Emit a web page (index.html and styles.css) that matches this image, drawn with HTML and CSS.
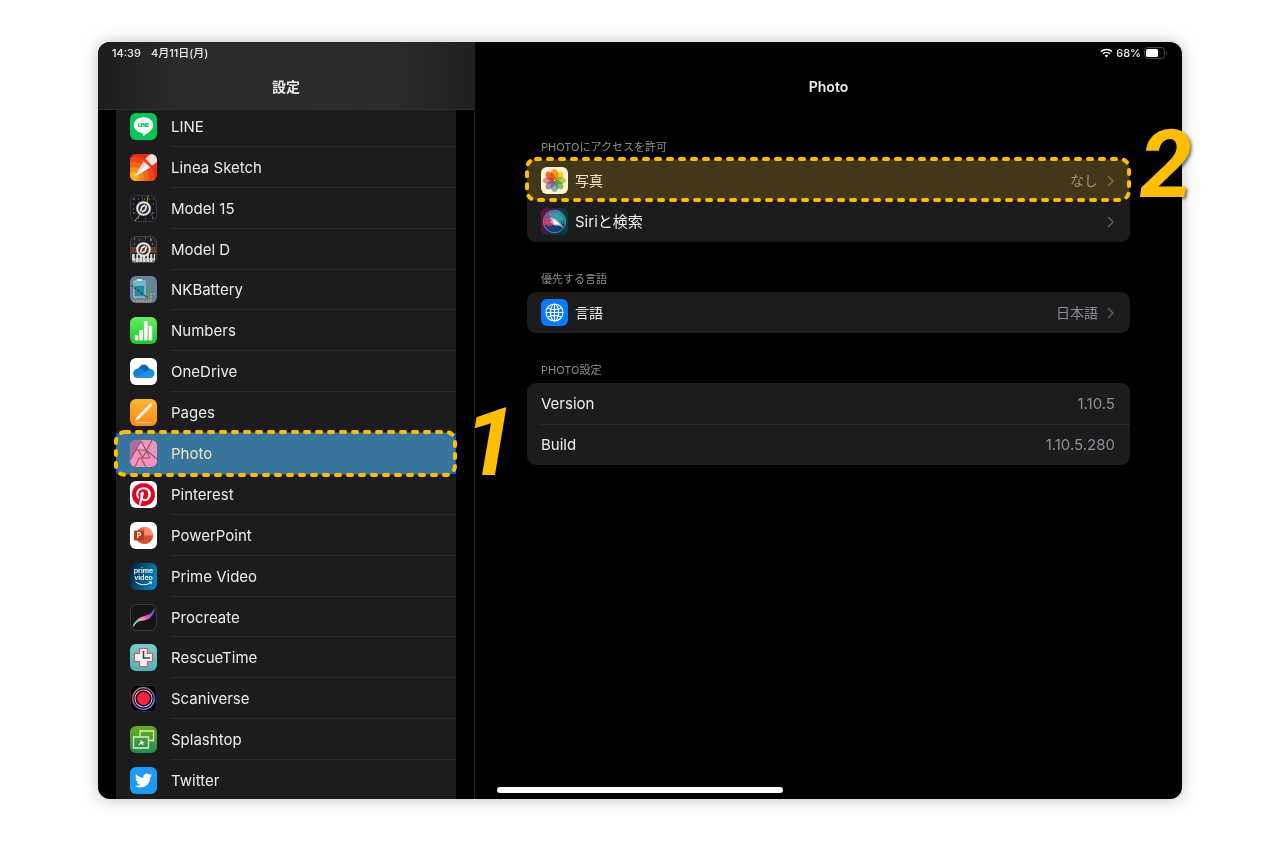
FILE: index.html
```html
<!DOCTYPE html>
<html lang="ja">
<head>
  <meta charset="UTF-8">
  <meta name="viewport" content="width=device-width, initial-scale=1.0">
  <title>設定 - Photo</title>
  <link rel="stylesheet" href="styles.css">
</head>
<body>
  <div class="device">
    <aside class="sidebar">
      <header class="sidebar-header">
        <div class="status">
          <span>14:39</span>
          <span>4月11日(月)</span>
        </div>
        <h2>設定</h2>
      </header>
      <nav class="scroller">
        <ul class="app-list">
          <li><a href="#">
            <svg class="icon" viewBox="0 0 27 27"><rect width="27" height="27" rx="6" fill="#06c755"/><path d="M13.500 4.200c5.600 0 9.700 3.400 9.700 7.900 0 4.800-5.500 8.500-9.500 10.800-.9.500-1.200 0-1-.9.300-1.500 0-1.900-1.300-2.100C7 19 3.800 16 3.800 12.100c0-4.500 4.100-7.900 9.700-7.900z" fill="#fff"/><text x="13.500" y="14" text-anchor="middle" class="line-mark">LINE</text></svg>
            <span>LINE</span></a></li>
          <li><a href="#">
            <svg class="icon" viewBox="0 0 27 27"><defs><clipPath id="tile"><rect width="27" height="27" rx="6"/></clipPath></defs><g clip-path="url(#tile)"><rect width="27" height="27" fill="#ea2d1c"/><circle cx="4" cy="23" r="20" fill="#f0441b"/><circle cx="4" cy="23" r="15" fill="#f5661b"/><circle cx="4" cy="23" r="10" fill="#fa8d1c"/><circle cx="4" cy="23" r="5" fill="#fdb024"/><path d="M4.500 22.500L13.500 7l6.500 6.500z" fill="#fbd3c4"/><path d="M4.500 22.500L17 10l3 3.500z" fill="#fff"/><path d="M15.500 5c2-3 5-5 9-6l4 5c-1 4-3 6-6.500 7.500z" fill="#f4e3da"/></g></svg>
            <span>Linea Sketch</span></a></li>
          <li><a href="#">
            <svg class="icon" viewBox="0 0 27 27"><rect x=".5" y=".5" width="26" height="26" rx="6" fill="#18191b" stroke="#38383a"/><path d="M3 4h2M8 4h1M14 4h1M19 4h1M23 4h1M3 9h1M23 9h1M3 14h1M3 18h2M8 23h1M15 24h1M22 18h2M22 23h1" stroke="#8b8f92"/><path d="M18 1c-1 4 0 8-3 12S8 22 5 26" fill="none" stroke="#c99a2b"/><path d="M12 1c1 3 0 5 2 6M21 12c-2 6 1 8 3 12" fill="none" stroke="#315f8f" stroke-width=".8"/><circle cx="13.500" cy="13.500" r="6.300" fill="#292a2c" stroke="#e9e9e9" stroke-width="2"/><path d="M10.500 16.500l1.200-4.500 3.300-2M16.500 10.500l-1.200 4.500-3.300 2" fill="none" stroke="#eee" stroke-width="1.600"/></svg>
            <span>Model 15</span></a></li>
          <li><a href="#">
            <svg class="icon" viewBox="0 0 27 27"><g clip-path="url(#tile)"><rect width="27" height="27" fill="#242427"/><path d="M4 3h1M9 4h1M15 2h1M20 4h2M4 8h1M22 8h1" stroke="#aaa"/><path d="M20 3h2" stroke="#c66c31"/><path d="M0 11h27v6H0z" fill="#6a3b25"/><path d="M2 18h23v9H2z" fill="#d6d6d6"/><path d="M5.500 18v9M9 18v9M12.500 18v9M16 18v9M19.500 18v9M23 18v9" stroke="#666" stroke-width=".7"/><path d="M5.500 17v5M9 17v5M16 17v5M19.500 17v5M23 17v5" stroke="#222" stroke-width="1.500"/></g><rect x=".5" y=".5" width="26" height="26" rx="6" fill="none" stroke="#444446"/><circle cx="13.500" cy="13.500" r="6.300" fill="#4a332a" stroke="#e9e9e9" stroke-width="2"/><path d="M10.500 16.500l1.200-4.500 3.300-2M16.500 10.500l-1.200 4.500-3.300 2" fill="none" stroke="#eee" stroke-width="1.600"/></svg>
            <span>Model D</span></a></li>
          <li><a href="#">
            <svg class="icon" viewBox="0 0 27 27"><rect width="27" height="27" rx="6" fill="#6d7f9c"/><path d="M4 5h11v16H4z" fill="#2589a3" stroke="#b5dbe2"/><path d="M7 3h5v2H7z" fill="#d8e8ec"/><path d="M5 6h9v4H5z" fill="#6db9c8"/><path d="M1 9l5 4 4 3 5 4 3 1" fill="none" stroke="#1d4958" stroke-width="1.200" stroke-dasharray="3 1"/><path d="M21 3l-2 17M19 21l-1-4" fill="none" stroke="#32b257" stroke-width="1.300"/><path d="M3 25h18v-7h4" fill="none" stroke="#c8cb51" stroke-dasharray="2 1"/></svg>
            <span>NKBattery</span></a></li>
          <li><a href="#">
            <svg class="icon" viewBox="0 0 27 27"><defs><linearGradient id="numbers" x2="0" y2="1"><stop stop-color="#6aec60"/><stop offset="1" stop-color="#18c82b"/></linearGradient></defs><rect width="27" height="27" rx="6" fill="url(#numbers)"/><path d="M5.200 18.500h2.800V23H5.200zM9.800 13.500h2.800V23H9.800zM14.400 4.500h2.800V23h-2.800zM19 9h2.800v14H19z" fill="#fff" stroke="#fff" stroke-width=".8" stroke-linejoin="round"/></svg>
            <span>Numbers</span></a></li>
          <li><a href="#">
            <svg class="icon" viewBox="0 0 27 27"><rect width="27" height="27" rx="6" fill="#fff"/><path d="M9 10c1.500-4.500 8-5.200 10 .5 2.500 0 3.800 2 4 4L12 17 6 12z" fill="#0f5fb8"/><path d="M7.500 20C1.500 19.500 2 11.500 7.500 10.500c2-.7 4 0 6 1.500l4 3-7 5z" fill="#1380d2"/><path d="M6 19.300l8-4.300 5-3.500c4-1.500 6.500 2 5.200 5.500-.8 2-2 3-4.200 3H8c-.8 0-1.500-.2-2-.7z" fill="#2093e0"/></svg>
            <span>OneDrive</span></a></li>
          <li><a href="#">
            <svg class="icon" viewBox="0 0 27 27"><defs><linearGradient id="pages" x2="0" y2="1"><stop stop-color="#ffb534"/><stop offset="1" stop-color="#ff8a17"/></linearGradient></defs><rect width="27" height="27" rx="6" fill="url(#pages)"/><path d="M5 22l1.700-3.800L20 4.800c1-1 2.800.7 1.800 1.800L8.600 20.200z" fill="#fff"/><path d="M5.500 23.500H22" stroke="#ffd19a"/></svg>
            <span>Pages</span></a></li>
          <li class="selected"><a href="#" aria-current="page">
            <svg class="icon" viewBox="0 0 27 27"><g clip-path="url(#tile)"><rect width="27" height="27" fill="#f583f2"/><path d="M0 0h11L0 20z" fill="#9654d8"/><path d="M11 2l5 8H7z" fill="#f79dfa"/><path d="M11 0h16v18L16 9z" fill="#e58af6"/><g fill="none" stroke="#703c80" stroke-width="1.200"><path d="M11 1L0 20M11 1l9 17M22 0l-9 17M5 10h11L27 19M8 10l5 8M20 18H9L5 27M11 18l5 9"/></g></g></svg>
            <span>Photo</span></a>
            <svg class="outline"><rect x="2" y="2" rx="9"/></svg>
            <b class="step step-one">1</b></li>
          <li><a href="#">
            <svg class="icon" viewBox="0 0 27 27"><rect width="27" height="27" rx="6" fill="#fff"/><path transform="translate(2 2) scale(.96)" fill="#e60023" d="M12.017 0C5.396 0 .029 5.367.029 11.987c0 5.079 3.158 9.417 7.618 11.162-.105-.949-.199-2.403.041-3.439.219-.937 1.406-5.957 1.406-5.957s-.359-.72-.359-1.781c0-1.663.967-2.911 2.168-2.911 1.024 0 1.518.769 1.518 1.688 0 1.029-.653 2.567-.992 3.992-.285 1.193.6 2.165 1.775 2.165 2.128 0 3.768-2.245 3.768-5.487 0-2.861-2.063-4.869-5.008-4.869-3.41 0-5.409 2.562-5.409 5.199 0 1.033.394 2.143.889 2.741.099.12.112.225.085.345-.09.375-.293 1.199-.334 1.363-.053.225-.172.271-.401.165-1.495-.69-2.433-2.878-2.433-4.646 0-3.776 2.748-7.252 7.92-7.252 4.158 0 7.392 2.967 7.392 6.923 0 4.135-2.607 7.462-6.233 7.462-1.214 0-2.354-.629-2.758-1.379l-.749 2.848c-.269 1.045-1.004 2.352-1.498 3.146 1.123.345 2.306.535 3.55.535 6.607 0 11.985-5.365 11.985-11.987C23.97 5.39 18.592.026 11.985.026L12.017 0z"/></svg>
            <span>Pinterest</span></a></li>
          <li><a href="#">
            <svg class="icon" viewBox="0 0 27 27"><rect width="27" height="27" rx="6" fill="#fff"/><circle cx="14.500" cy="13.500" r="8.500" fill="#ed6c47"/><path d="M14.500 5a8.500 8.500 0 0 1 8.500 8.500h-8.500z" fill="#ff8f6b"/><path d="M6 13.500h17a8.500 8.500 0 0 1-17 0z" fill="#d35230"/><rect x="4" y="8.500" width="10" height="10" rx="1" fill="#b83b1d"/><text x="9" y="16" text-anchor="middle" class="ppt-mark">P</text></svg>
            <span>PowerPoint</span></a></li>
          <li><a href="#">
            <svg class="icon" viewBox="0 0 27 27"><defs><linearGradient id="prime" x2="1" y2=".3"><stop stop-color="#061b40"/><stop offset="1" stop-color="#0a7fb5"/></linearGradient></defs><rect width="27" height="27" rx="6" fill="url(#prime)"/><text x="13.500" y="10" text-anchor="middle" class="prime-mark">prime</text><text x="13.500" y="16.500" text-anchor="middle" class="prime-mark">video</text><path d="M5.500 18.800c5 3.800 11 3.800 15.500.7M19 19l2.600-.2-.6 2.400" fill="none" stroke="#fff"/></svg>
            <span>Prime Video</span></a></li>
          <li><a href="#">
            <svg class="icon" viewBox="0 0 27 27"><defs><linearGradient id="brush" x1="0" y1="1" x2="1" y2="0"><stop stop-color="#f4f0a2"/><stop offset=".25" stop-color="#63c8b2"/><stop offset=".4" stop-color="#f6a2ad"/><stop offset=".6" stop-color="#e64dcf"/><stop offset=".8" stop-color="#7850eb"/><stop offset="1" stop-color="#4d9bea"/></linearGradient></defs><rect x=".5" y=".5" width="26" height="26" rx="6" fill="#161617" stroke="#39393b"/><path d="M2.500 23.500c1-5 4-8.500 9-10.500 5-2 10-2 13-9-.5 5-2 8.800-6 11-4 2-9 1-12.500 4.500z" fill="url(#brush)"/></svg>
            <span>Procreate</span></a></li>
          <li><a href="#">
            <svg class="icon" viewBox="0 0 27 27"><defs><linearGradient id="rescue" x2="0" y2="1"><stop stop-color="#77cdcc"/><stop offset="1" stop-color="#49b4b2"/></linearGradient></defs><rect width="27" height="27" rx="6" fill="url(#rescue)"/><path d="M9.500 4.500h8v5h5v8h-5v5h-8v-5h-5v-8h5z" fill="#f2f2f2" stroke="#d5575d" stroke-width="1.200"/><path d="M13.500 7v7H20" fill="none" stroke="#3c4548" stroke-width="1.600"/></svg>
            <span>RescueTime</span></a></li>
          <li><a href="#">
            <svg class="icon" viewBox="0 0 27 27"><defs><linearGradient id="scan" x1="0" y1="0" x2="1" y2="1"><stop stop-color="#ffb13b"/><stop offset=".35" stop-color="#ee4a76"/><stop offset=".7" stop-color="#6270ff"/><stop offset="1" stop-color="#49c8ff"/></linearGradient></defs><rect x=".5" y=".5" width="26" height="26" rx="6" fill="#020203" stroke="#29292b"/><circle cx="13.500" cy="13.500" r="10.800" fill="none" stroke="url(#scan)" stroke-width="1.300"/><circle cx="13.500" cy="13.500" r="8.500" fill="none" stroke="#dba4f2" stroke-width="1.200"/><circle cx="13.500" cy="13.500" r="6.500" fill="#ff2342"/></svg>
            <span>Scaniverse</span></a></li>
          <li><a href="#">
            <svg class="icon" viewBox="0 0 27 27"><defs><linearGradient id="splash" x2="0" y2="1"><stop stop-color="#69ae18"/><stop offset="1" stop-color="#218a56"/></linearGradient></defs><rect width="27" height="27" rx="6" fill="url(#splash)"/><path d="M10 10V5h13.500v9.500H18.500M3.500 11h15v11h-15z" fill="none" stroke="#d9efc8" stroke-width="1.300"/><path d="M8 19l2-2 1-3 2 2 2 .3-2 1 .3 2-2-1.300z" fill="#fff"/></svg>
            <span>Splashtop</span></a></li>
          <li><a href="#">
            <svg class="icon" viewBox="0 0 27 27"><rect width="27" height="27" rx="6" fill="#1d9bf0"/><path transform="translate(5 5) scale(.71)" fill="#fff" d="M23.953 4.57a10 10 0 01-2.825.775 4.958 4.958 0 002.163-2.723c-.951.555-2.005.959-3.127 1.184a4.92 4.92 0 00-8.384 4.482C7.69 8.095 4.067 6.13 1.64 3.162a4.822 4.822 0 00-.666 2.475c0 1.71.87 3.213 2.188 4.096a4.904 4.904 0 01-2.228-.616v.06a4.923 4.923 0 003.946 4.827 4.996 4.996 0 01-2.212.085 4.936 4.936 0 004.604 3.417 9.867 9.867 0 01-6.102 2.105c-.39 0-.779-.023-1.17-.067a13.995 13.995 0 007.557 2.209c9.053 0 13.998-7.496 13.998-13.985 0-.21 0-.42-.015-.63A9.935 9.935 0 0024 4.59z"/></svg>
            <span>Twitter</span></a></li>
        </ul>
      </nav>
    </aside>

    <main class="detail">
      <header class="detail-header">
        <div class="status status-right">
          <svg class="wifi" viewBox="0 0 13 10"><path d="M1 3.700c3.200-3 7.800-3 11 0M3 5.900c2-1.900 5-1.900 7 0" fill="none" stroke="#fff" stroke-width="1.600"/><path d="M4.700 7.500c1-1 2.600-1 3.600 0L6.500 9.500z" fill="#fff"/></svg>
          <span>68%</span>
          <svg class="battery" viewBox="0 0 24 12"><rect x=".5" y=".5" width="20" height="11" rx="3" fill="none" stroke="#4a4a4c"/><rect x="2" y="2" width="12" height="8" rx="1.500" fill="#fff"/><path d="M22 4c1.600.5 1.600 3.500 0 4z" fill="#4a4a4c"/></svg>
        </div>
        <h1>Photo</h1>
      </header>

      <section>
        <h3>PHOTOにアクセスを許可</h3>
        <div class="card">
          <a class="row" href="#">
            <svg class="icon" viewBox="0 0 27 27"><rect width="27" height="27" rx="6" fill="#fff"/><g class="petals"><ellipse cx="13.500" cy="7.500" rx="3.700" ry="5.500" fill="#f78a14"/><ellipse cx="13.500" cy="7.500" rx="3.700" ry="5.500" fill="#e4d51c" transform="rotate(45 13.500 13.500)"/><ellipse cx="13.500" cy="7.500" rx="3.700" ry="5.500" fill="#9bc94a" transform="rotate(90 13.500 13.500)"/><ellipse cx="13.500" cy="7.500" rx="3.700" ry="5.500" fill="#56b783" transform="rotate(135 13.500 13.500)"/><ellipse cx="13.500" cy="7.500" rx="3.700" ry="5.500" fill="#6aa7da" transform="rotate(180 13.500 13.500)"/><ellipse cx="13.500" cy="7.500" rx="3.700" ry="5.500" fill="#8a78c0" transform="rotate(225 13.500 13.500)"/><ellipse cx="13.500" cy="7.500" rx="3.700" ry="5.500" fill="#d978a8" transform="rotate(270 13.500 13.500)"/><ellipse cx="13.500" cy="7.500" rx="3.700" ry="5.500" fill="#f0412e" transform="rotate(315 13.500 13.500)"/></g></svg>
            <span class="label kanji">写真</span>
            <span class="value kanji">なし</span>
            <svg class="chevron" viewBox="0 0 8 12"><path d="M1 1l5 5-5 5"/></svg>
            <svg class="outline outline-dim"><rect x="2" y="2" rx="9"/></svg>
            <b class="step step-two">2</b>
          </a>
          <a class="row" href="#">
            <svg class="icon" viewBox="0 0 27 27"><defs><linearGradient id="siri" x2="1" y2=".2"><stop stop-color="#7d0b3f"/><stop offset=".5" stop-color="#1d2450"/><stop offset="1" stop-color="#063f3a"/></linearGradient><linearGradient id="orb" x2="1" y2=".4"><stop stop-color="#b0306c"/><stop offset=".4" stop-color="#5c5a94"/><stop offset=".6" stop-color="#2f87a8"/><stop offset="1" stop-color="#1a7a80"/></linearGradient></defs><rect width="27" height="27" rx="6" fill="url(#siri)"/><circle cx="13.500" cy="13.500" r="11.300" fill="url(#orb)"/><path d="M4 17l9-3 11 2c-1 5-4 8.500-10 8.500S4.500 20 4 17z" fill="#142a6c" opacity=".8"/><ellipse cx="8.500" cy="14" rx="5" ry="4" fill="#e8356c" opacity=".8"/><path d="M7 6c5-4 14-1 16 6l-9 1z" fill="#37b2a4" opacity=".6"/><path d="M8 9c4 1 8 2 10 5 2 2 4 3 4 6-3-3-6-3-8-2 0-2-2-3-5-3 2-1 2-3-1-6z" fill="#c9dcf6" opacity=".7"/><path d="M11 11c3 1 6 3 8 6-3-1-5-1-7 0 1-2 1-4-1-6z" fill="#fff"/><circle cx="13.500" cy="13.500" r="11.300" fill="none" stroke="#6f98a8" stroke-width=".7"/></svg>
            <span class="label">Siriと検索</span>
            <svg class="chevron" viewBox="0 0 8 12"><path d="M1 1l5 5-5 5"/></svg>
          </a>
        </div>
      </section>

      <section>
        <h3>優先する言語</h3>
        <div class="card">
          <a class="row" href="#">
            <svg class="icon" viewBox="0 0 27 27"><rect width="27" height="27" rx="6" fill="#0a7aff"/><g fill="none" stroke="#fff" stroke-width="1.100"><circle cx="13.500" cy="13.500" r="8.500"/><ellipse cx="13.500" cy="13.500" rx="4" ry="8.500"/><path d="M13.500 5v17M5 13.500h17M6.500 9c4 1.800 10 1.800 14 0M6.500 18c4-1.800 10-1.800 14 0"/></g></svg>
            <span class="label kanji">言語</span>
            <span class="value kanji">日本語</span>
            <svg class="chevron" viewBox="0 0 8 12"><path d="M1 1l5 5-5 5"/></svg>
          </a>
        </div>
      </section>

      <section>
        <h3>PHOTO設定</h3>
        <dl class="card">
          <div class="row">
            <dt class="label">Version</dt>
            <dd class="value">1.10.5</dd>
          </div>
          <div class="row divided">
            <dt class="label">Build</dt>
            <dd class="value">1.10.5.280</dd>
          </div>
        </dl>
      </section>
    </main>
    <div class="home-bar"></div>
  </div>
</body>
</html>
```
FILE: styles.css
```css
:root {
  --panel: #1c1c1e;
  --line: #2c2c2e;
  --text: #ececee;
  --muted: #8e8e93;
  --mark: #ffbe00;
}

* {
  box-sizing: border-box;
  margin: 0;
  padding: 0;
}

body {
  min-height: 100vh;
  padding: 42px 98px 43px;
  display: flex;
  background: #fff;
  color: var(--text);
  font-family: Inter, "Noto Sans CJK JP", sans-serif;
  font-size: 15px;
  line-height: 20px;
}

a {
  color: inherit;
  text-decoration: none;
}

.device {
  position: relative;
  flex: 1;
  display: flex;
  background: #000;
  border-radius: 12px;
  box-shadow: 0 0 16px rgba(0, 0, 0, 0.25);
}

/* left column */
.sidebar {
  width: 377px;
  display: flex;
  flex-direction: column;
  border-right: 1px solid #202022;
}

.sidebar-header {
  position: relative;
  z-index: 1;
  height: 68px;
  border-bottom: 1px solid #303032;
  border-top-left-radius: 12px;
  background: linear-gradient(90deg, #1d1d1e, #2b2b2c 22%, #2a2a2b 80%, #202021);
}

.status {
  height: 22px;
  padding: 0 14px;
  display: flex;
  align-items: center;
  gap: 10px;
  font-size: 11px;
  font-weight: 500;
}

.status-right {
  justify-content: flex-end;
  gap: 3px;
}

.wifi {
  width: 13px;
  height: 10px;
}

.battery {
  width: 24px;
  height: 12px;
}

h1,
h2 {
  padding-top: 13px;
  font-size: 14px;
  font-weight: 600;
  line-height: 20px;
  text-align: center;
}

.scroller {
  flex: 1;
  display: flex;
  padding: 0 18px;
  background: var(--panel) content-box;
}

/* the list starts under the header and runs past the bottom edge */
.app-list {
  flex: 1;
  display: grid;
  grid-template-rows: repeat(17, minmax(40px, 1fr));
  margin: -4px 0 -2px;
  list-style: none;
}

.app-list li {
  position: relative;
}

.app-list a {
  height: 100%;
  padding-left: 14px;
  display: flex;
  align-items: center;
  gap: 14px;
}

.app-list span {
  flex: 1;
  align-self: stretch;
  display: flex;
  align-items: center;
  padding-top: 2px;
  border-bottom: 1px solid var(--line);
}

.app-list li:last-child span,
.app-list .selected span,
.app-list li:nth-child(8) span {
  border-bottom-color: transparent;
}

.app-list .selected {
  background: #005fc8;
}

.icon {
  width: 27px;
  height: 27px;
  flex: none;
}

.line-mark {
  fill: #06c755;
  font-size: 5px;
  font-weight: 900;
}

.ppt-mark {
  fill: #fff;
  font-size: 7px;
  font-weight: 700;
}

.prime-mark {
  fill: #fff;
  font-size: 7px;
  font-weight: 600;
}

.petals {
  opacity: 0.9;
}

.petals ellipse {
  mix-blend-mode: multiply;
}

/* right column */
.detail {
  flex: 1;
}

.detail-header {
  height: 94px;
}

section {
  padding: 0 52px 26px;
}

h3 {
  height: 24px;
  padding: 0 14px;
  color: var(--muted);
  font-size: 11px;
  font-weight: 400;
  line-height: 22px;
}

.card {
  background: var(--panel);
  border-radius: 9px;
}

.row {
  position: relative;
  height: 41px;
  padding: 0 15px 0 14px;
  display: flex;
  align-items: center;
}

.row .icon {
  margin-right: 7px;
}

.divided::before {
  content: "";
  position: absolute;
  top: 0;
  left: 14px;
  right: 0;
  border-top: 1px solid var(--line);
}

.label {
  flex: 1;
}

.value {
  color: var(--muted);
}

.kanji {
  font-size: 14px;
}

.chevron {
  width: 8px;
  height: 12px;
  margin-left: 9px;
  fill: none;
  stroke: #5c5c60;
  stroke-width: 1.5;
}

/* highlight marks */
.outline {
  position: absolute;
  z-index: 1;
  top: -3px;
  left: -2px;
  width: calc(100% + 3px);
  height: calc(100% + 6px);
}

.outline rect {
  width: calc(100% - 4px);
  height: calc(100% - 4px);
  fill: rgba(255, 190, 0, 0.22);
  stroke: var(--mark);
  stroke-width: 4px;
  stroke-linecap: round;
  stroke-dasharray: 4 8;
}

.outline-dim {
  height: calc(100% + 4px);
}

.outline-dim rect {
  fill: rgba(255, 190, 0, 0.17);
}

.step {
  position: absolute;
  z-index: 2;
  color: var(--mark);
  font-family: Roboto, sans-serif;
  font-size: 94px;
  font-style: italic;
  font-weight: 700;
  line-height: 94px;
  text-shadow: 2px 2px 3px rgba(0, 0, 0, 0.5);
}

.step-one {
  top: -37px;
  left: 348px;
}

.step-two {
  top: -42px;
  right: -62px;
}

.home-bar {
  position: absolute;
  bottom: 6px;
  left: 50%;
  width: 286px;
  height: 6px;
  margin-left: -143px;
  background: #fff;
  border-radius: 3px;
}
```
